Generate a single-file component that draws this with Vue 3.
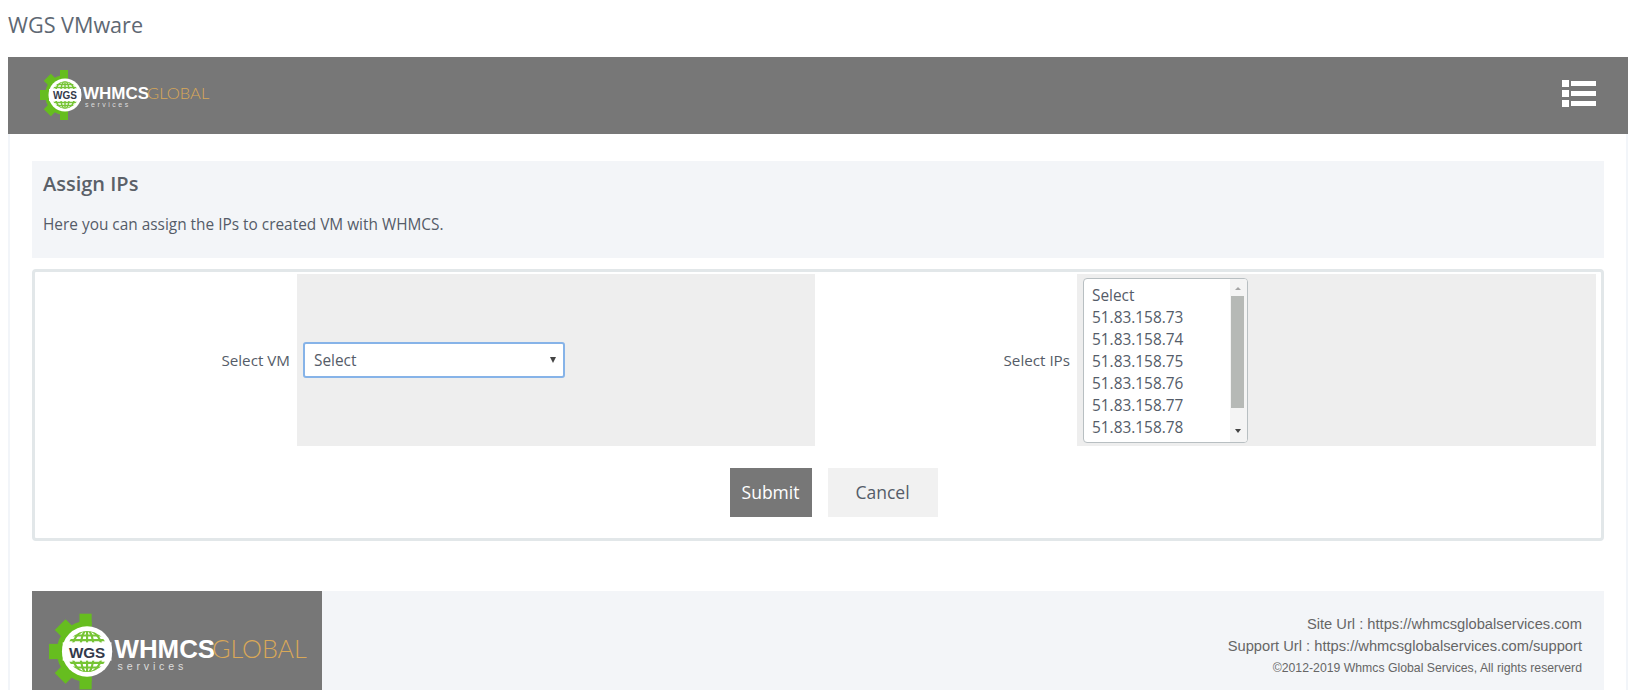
<script setup>
const ips = ['Select', '51.83.158.73', '51.83.158.74', '51.83.158.75', '51.83.158.76', '51.83.158.77', '51.83.158.78']
</script>

<template>
  <div class="page">
    <h1 class="title">WGS VMware</h1>

    <svg width="0" height="0" class="defs">
      <defs>
        <clipPath id="gearClip"><rect x="0" y="0" width="28" height="50" /></clipPath>
        <clipPath id="globeClip"><circle cx="25" cy="25" r="13.5" /></clipPath>
        <symbol id="wgsLogo" viewBox="0 0 172 50">
          <g clip-path="url(#gearClip)" fill="#66bd1f">
            <circle cx="25" cy="25" r="20" />
            <rect x="20" y="0" width="10" height="8" />
            <rect x="20" y="42" width="10" height="8" />
            <rect x="0" y="20" width="8" height="10" />
            <rect x="20" y="0" width="10" height="8" transform="rotate(-45 25 25)" />
            <rect x="20" y="42" width="10" height="8" transform="rotate(45 25 25)" />
          </g>
          <circle cx="25" cy="25" r="16.500" fill="#fff" />
          <g clip-path="url(#globeClip)" fill="none" stroke="#76c435" stroke-width="1.400">
            <ellipse cx="25" cy="25" rx="4.500" ry="14" />
            <ellipse cx="25" cy="25" rx="10" ry="14" />
            <path d="M25 10V40M10 14.500H40M10 17.500H40M10 32.500H40M10 35.500H40" />
          </g>
          <rect x="9" y="19" width="32" height="12" fill="#fff" />
          <text x="25" y="29" class="wgs">WGS</text>
          <text x="43" y="29" class="whmcs">WHMCS</text>
          <text x="107" y="29" class="global">GLOBAL</text>
          <text x="45" y="37" class="services">services</text>
        </symbol>
      </defs>
    </svg>

    <div class="shell">
      <header class="topbar">
        <svg class="logo-top"><use href="#wgsLogo" /></svg>
        <svg class="menu" width="34" height="27" viewBox="0 0 34 27" fill="#fff">
          <rect x="0" y="0" width="7" height="7" />
          <rect x="9" y="1" width="25" height="5" />
          <rect x="0" y="10" width="7" height="7" />
          <rect x="9" y="11" width="25" height="5" />
          <rect x="0" y="20" width="7" height="7" />
          <rect x="9" y="21" width="25" height="5" />
        </svg>
      </header>

      <main class="content">
        <section class="intro">
          <h2>Assign IPs</h2>
          <p>Here you can assign the IPs to created VM with WHMCS.</p>
        </section>

        <form class="formbox" @submit.prevent>
          <div class="fields">
            <label class="lbl">Select VM</label>
            <div class="cell">
              <div class="dropdown">
                <span>Select</span>
                <i class="caret"></i>
              </div>
            </div>
            <label class="lbl">Select IPs</label>
            <div class="cell">
              <div class="listbox">
                <ul>
                  <li v-for="ip in ips" :key="ip">{{ ip }}</li>
                </ul>
                <div class="scroll">
                  <i class="up"></i>
                  <b class="thumb"></b>
                  <i class="down"></i>
                </div>
              </div>
            </div>
          </div>
          <div class="actions">
            <button class="btn submit" type="submit">Submit</button>
            <button class="btn cancel" type="button">Cancel</button>
          </div>
        </form>

        <footer class="foot">
          <div class="foot-logo">
            <svg class="logo-foot"><use href="#wgsLogo" /></svg>
          </div>
          <div class="foot-text">
            <p>Site Url : https://whmcsglobalservices.com</p>
            <p>Support Url : https://whmcsglobalservices.com/support</p>
            <p class="copy">©2012-2019 Whmcs Global Services, All rights reserverd</p>
          </div>
        </footer>
      </main>
    </div>
  </div>
</template>

<style scoped>
.page {
  height: 690px;
  overflow: hidden;
  background: #fff;
  font-family: "Open Sans", sans-serif;
  color: #555c68;
  font-size: 15.400px;
}
.defs { position: absolute; }
.title {
  margin: 0;
  height: 57px;
  padding: 10px 0 0 8px;
  box-sizing: border-box;
  font-size: 21.600px;
  line-height: 29px;
  font-weight: 400;
  color: #5e6873;
}
.shell {
  margin: 0 4px 0 8px;
  height: 633px;
  box-sizing: border-box;
  border-left: 2px solid #f2f5f9;
  border-right: 2px solid #f2f5f9;
}
.topbar {
  margin: 0 -2px;
  height: 77px;
  background: #777;
  display: flex;
  align-items: flex-start;
  justify-content: space-between;
  padding: 13px 32px 0 32px;
  box-sizing: border-box;
}
.logo-top { width: 172px; height: 50px; }
.menu { margin-top: 10px; }
.content { padding: 27px 22px 0; }
.intro {
  background: #f3f5f8;
  height: 97px;
  padding: 9px 11px 0;
  box-sizing: border-box;
}
.intro h2 {
  margin: 0;
  font-size: 20px;
  line-height: 27px;
  font-weight: 600;
  color: #5a6068;
}
.intro p {
  margin: 17px 0 0;
  line-height: 21px;
  font-size: 15.400px;
}
.formbox {
  margin-top: 11px;
  height: 272px;
  box-sizing: border-box;
  border: 3px solid #e2e7e9;
  border-radius: 4px;
  padding: 2px 5px 0 0;
}
.fields {
  display: grid;
  grid-template-columns: 262px 518px 262px 519px;
  height: 172px;
}
.lbl {
  display: flex;
  align-items: center;
  justify-content: flex-end;
  padding-right: 7px;
  color: #555c68;
  font-size: 15.200px;
}
.cell {
  background: #eee;
  display: flex;
  align-items: center;
  padding-left: 6px;
}
.dropdown {
  width: 262px;
  height: 36px;
  box-sizing: border-box;
  background: #fff;
  border: 2px solid #86b3e8;
  border-radius: 3px;
  display: flex;
  align-items: center;
  justify-content: space-between;
  padding: 0 7px 0 9px;
}
.caret {
  width: 0;
  height: 0;
  border-left: 3px solid transparent;
  border-right: 3px solid transparent;
  border-top: 6px solid #444;
}
.listbox {
  width: 165px;
  height: 165px;
  box-sizing: border-box;
  background: #fff;
  border: 1px solid #b8bfc2;
  border-radius: 4px;
  display: flex;
  overflow: hidden;
}
.listbox ul {
  flex: 1;
  margin: 0;
  padding: 6px 0 0 8px;
  list-style: none;
}
.listbox li {
  height: 22px;
  line-height: 22px;
}
.scroll {
  width: 15px;
  padding: 0 2px 0 0;
  box-sizing: content-box;
  display: flex;
  flex-direction: column;
  align-items: center;
  background: #f4f4f4;
}
.up, .down {
  width: 0;
  height: 0;
  border-left: 3px solid transparent;
  border-right: 3px solid transparent;
}
.up {
  margin: 8px 0 6px;
  border-bottom: 3px solid #a5a5a5;
}
.down {
  margin-top: 21px;
  border-top: 4px solid #444;
}
.thumb {
  width: 13px;
  height: 112px;
  background: #b6b9b6;
  flex: none;
}
.actions {
  display: flex;
  justify-content: center;
  gap: 16px;
  margin-top: 22px;
  padding-left: 36px;
}
.btn {
  height: 49px;
  border: 0;
  padding: 0 0 1px;
  font: 400 17.500px "Open Sans", sans-serif;
}
.submit {
  width: 82px;
  background: #777;
  color: #fff;
}
.cancel {
  width: 110px;
  background: #f1f1f1;
  color: #555c68;
}
.foot {
  margin-top: 50px;
  height: 100px;
  background: #f3f5f8;
  display: flex;
  justify-content: space-between;
}
.foot-logo {
  width: 290px;
  height: 100px;
  background: #777;
  padding: 22px 0 0 17px;
  box-sizing: border-box;
}
.logo-foot { width: 262px; height: 77px; display: block; }
.foot-text {
  padding: 22px 22px 0 0;
  text-align: right;
  font-family: "Liberation Sans", Arial, sans-serif;
  color: #666;
}
.foot-text p {
  margin: 0;
  height: 22px;
  line-height: 22px;
  font-size: 14.700px;
}
.foot-text .copy { font-size: 12.250px; }
.wgs {
  font: 700 10px "Liberation Sans", sans-serif;
  fill: #33394a;
  text-anchor: middle;
}
.whmcs {
  font: 700 17px "Liberation Sans", sans-serif;
  fill: #fff;
}
.global {
  font: 300 16.500px Lato, sans-serif;
  fill: #d9a858;
}
.services {
  font: 400 7px "Liberation Sans", sans-serif;
  fill: #ddd;
  letter-spacing: 2.500px;
}
</style>
